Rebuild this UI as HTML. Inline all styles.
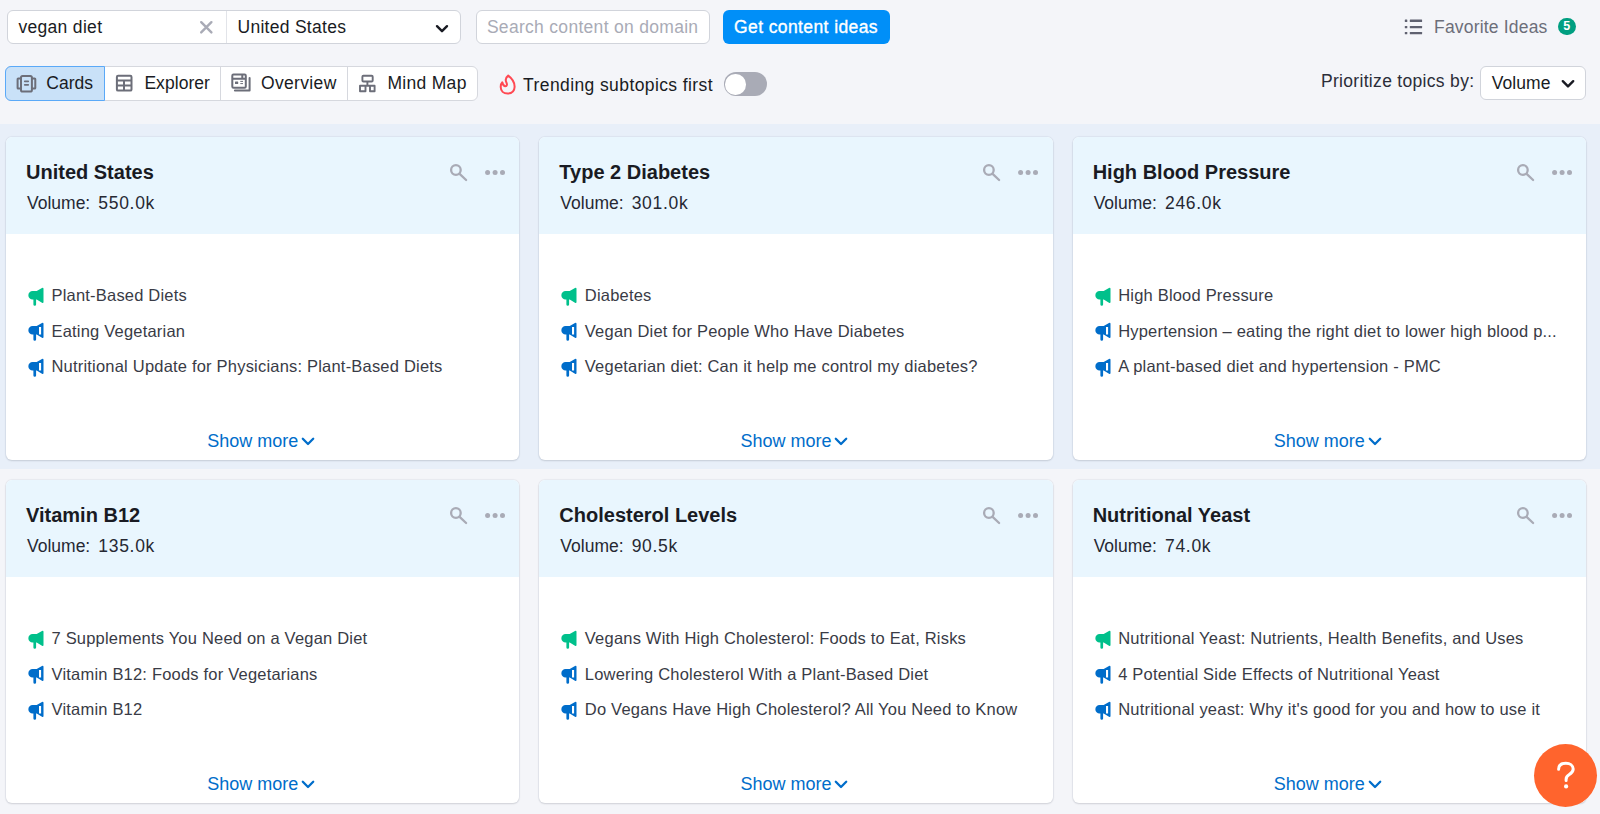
<!DOCTYPE html>
<html><head><meta charset="utf-8"><style>
html,body{margin:0;padding:0;}
body{width:1600px;height:814px;position:relative;overflow:hidden;background:#f4f5f9;font-family:"Liberation Sans",sans-serif;}
.t{position:absolute;white-space:nowrap;}
.box{position:absolute;border:1px solid #d1d4db;border-radius:6px;background:#fff;}
.card{position:absolute;background:#fff;border-radius:6px;box-shadow:0 0 1px 1px rgba(25,40,80,0.05),0 1px 2px rgba(25,27,35,0.12);overflow:hidden;}
.hd{position:absolute;left:0;top:0;right:0;height:97px;background:#e9f6fe;}
</style></head><body>
<div class="box" style="left:7px;top:10px;width:452px;height:32px;"></div>
<div style="position:absolute;left:226px;top:11px;width:1px;height:32px;background:#e2e4e9"></div>
<div class="t" style="left:18.4px;top:19.48px;font-size:17.5px;line-height:17.5px;color:#191b23;letter-spacing:0.32px;font-weight:normal;">vegan diet</div>
<svg style="position:absolute;left:199px;top:19.6px" width="15" height="15" viewBox="0 0 15 15"><path d="M2.2 2.2L12.4 12.4M12.4 2.2L2.2 12.4" stroke="#a9abb6" stroke-width="2.4" stroke-linecap="round"/></svg>
<div class="t" style="left:237.5px;top:18.68px;font-size:17.5px;line-height:17.5px;color:#191b23;letter-spacing:0.28px;font-weight:normal;">United States</div>
<svg style="position:absolute;left:434px;top:22.8px" width="16" height="12" viewBox="0 0 16 12"><path d="M3 3.2L8 8.2L13 3.2" fill="none" stroke="#191b23" stroke-width="2.4" stroke-linecap="round" stroke-linejoin="round"/></svg>
<div class="box" style="left:475.5px;top:10px;width:232.5px;height:32px;"></div>
<div class="t" style="left:486.9px;top:19.18px;font-size:17.5px;line-height:17.5px;color:#a9abb6;letter-spacing:0.3px;font-weight:normal;">Search content on domain</div>
<div style="position:absolute;left:723px;top:10px;width:167px;height:34px;background:#008ff8;border-radius:6px"></div>
<div class="t" style="left:734px;top:18.98px;font-size:17.5px;line-height:17.5px;color:#fff;letter-spacing:0.4px;font-weight:normal;-webkit-text-stroke:0.35px #fff;">Get content ideas</div>
<svg style="position:absolute;left:1402px;top:17px" width="24" height="20" viewBox="0 0 24 20"><g fill="#5f6170"><rect x="2.8" y="2.6" width="2.5" height="2.3" rx="0.5"/><rect x="2.8" y="8.9" width="2.5" height="2.3" rx="0.5"/><rect x="2.8" y="14.9" width="2.5" height="2.3" rx="0.5"/><rect x="7.8" y="2.6" width="12.3" height="2.3" rx="0.5"/><rect x="7.8" y="8.9" width="12.3" height="2.3" rx="0.5"/><rect x="7.8" y="14.9" width="12.3" height="2.3" rx="0.5"/></g></svg>
<div class="t" style="left:1434px;top:18.98px;font-size:17.5px;line-height:17.5px;color:#6c6e79;letter-spacing:0.19px;font-weight:normal;">Favorite Ideas</div>
<div style="position:absolute;left:1558px;top:17.7px;width:17.7px;height:17.7px;border-radius:50%;background:#009f81;color:#fff;font-size:12.5px;line-height:17.7px;text-align:center;font-weight:bold">5</div>
<div style="position:absolute;left:5px;top:66px;width:473px;height:34.5px;box-sizing:border-box;border:1px solid #d6d8de;border-radius:6px;background:#fff"></div>
<div style="position:absolute;left:5px;top:66px;width:99.5px;height:34.5px;box-sizing:border-box;border:1px solid #5aa9f8;border-radius:6px 0 0 6px;background:#c9e1f8"></div>
<div style="position:absolute;left:220.3px;top:67px;width:1px;height:32.5px;background:#d6d8de"></div>
<div style="position:absolute;left:346.9px;top:67px;width:1px;height:32.5px;background:#d6d8de"></div>
<div class="t" style="left:46.25px;top:75.08px;font-size:17.5px;line-height:17.5px;color:#191b23;letter-spacing:0.02px;font-weight:normal;">Cards</div>
<div class="t" style="left:144.4px;top:75.08px;font-size:17.5px;line-height:17.5px;color:#191b23;letter-spacing:0.05px;font-weight:normal;">Explorer</div>
<div class="t" style="left:261px;top:75.08px;font-size:17.5px;line-height:17.5px;color:#191b23;letter-spacing:0.34px;font-weight:normal;">Overview</div>
<div class="t" style="left:387.5px;top:75.08px;font-size:17.5px;line-height:17.5px;color:#191b23;letter-spacing:0.29px;font-weight:normal;">Mind Map</div>
<svg style="position:absolute;left:14px;top:73px" width="24" height="20" viewBox="0 0 24 20"><g fill="none" stroke="#6c6e79" stroke-width="2"><rect x="7" y="2.9" width="10.9" height="15.6" rx="1.6"/><path d="M7 5.5H4.2Q3.6 5.5 3.6 6.1V14.9Q3.6 15.5 4.2 15.5H7M17.9 5.5H20.7Q21.3 5.5 21.3 6.1V14.9Q21.3 15.5 20.7 15.5H17.9"/></g><g stroke="#6c6e79" stroke-width="1.8" stroke-linecap="round"><path d="M10.8 8.3H14.2M10.8 11.8H14.2"/></g></svg>
<svg style="position:absolute;left:114px;top:73px" width="20" height="20" viewBox="0 0 20 20"><g fill="none" stroke="#6c6e79" stroke-width="2"><rect x="2.9" y="2.8" width="14.6" height="14.8" rx="1.2"/><path d="M2.9 7.6H17.5M2.9 12.4H17.5M10 7.6V17.6"/></g></svg>
<svg style="position:absolute;left:229px;top:71px" width="24" height="23" viewBox="0 0 24 23"><g fill="none" stroke="#6c6e79" stroke-width="2"><rect x="3.3" y="3.5" width="13.5" height="13.2" rx="1.2"/><path d="M3.3 7.7H16.8M13.3 3.5V7.7"/><path d="M20.6 7V19.6H5.9" stroke-linecap="round" stroke-linejoin="round"/></g><rect x="6" y="10.5" width="3.2" height="2.6" fill="#6c6e79" rx="0.4"/><path d="M11.3 10.4H14M11.3 12.6H14" stroke="#6c6e79" stroke-width="1"/></svg>
<svg style="position:absolute;left:356px;top:72px" width="22" height="22" viewBox="0 0 22 22"><g fill="none" stroke="#6c6e79" stroke-width="1.9"><rect x="6.4" y="3.8" width="10.3" height="5.7" rx="1"/><path d="M11.4 9.5V13.8"/><path d="M4 13.8H18.6V19.3H14V13.8H9.5V19.3H4Z" stroke-linejoin="round"/></g></svg>
<svg style="position:absolute;left:498px;top:73px" width="20" height="24" viewBox="0 0 20 24"><path d="M10.2 2.6C14.5 5.8 16.8 8.8 16.6 14C16.4 18.5 13.2 20.5 9.6 20.5C5.6 20.5 2.7 17.8 2.7 14C2.7 11.6 3.3 10.2 4.3 9.3C4.8 11.8 6 13.3 7.4 13.3C9.1 13.3 9.3 11.3 8.4 9.5C7.2 7 7.6 4.6 10.2 2.6Z" fill="none" stroke="#ff4953" stroke-width="2" stroke-linejoin="round"/></svg>
<div class="t" style="left:523.1px;top:77.38px;font-size:17.5px;line-height:17.5px;color:#191b23;letter-spacing:0.4px;font-weight:normal;">Trending subtopics first</div>
<div style="position:absolute;left:724px;top:72.2px;width:43.4px;height:24.3px;border-radius:13px;background:#a9abb6"></div>
<div style="position:absolute;left:725.4px;top:74.1px;width:20.5px;height:20.5px;border-radius:50%;background:#fff"></div>
<div class="t" style="left:1321px;top:73.38px;font-size:17.5px;line-height:17.5px;color:#2b2d38;letter-spacing:0.31px;font-weight:normal;">Prioritize topics by:</div>
<div class="box" style="left:1480px;top:66.3px;width:104.4px;height:31.9px;"></div>
<div class="t" style="left:1491.7px;top:75.18px;font-size:17.5px;line-height:17.5px;color:#191b23;letter-spacing:0.07px;font-weight:normal;">Volume</div>
<svg style="position:absolute;left:1560px;top:78px" width="16" height="12" viewBox="0 0 16 12"><path d="M2.8 3.2L8 8.4L13.2 3.2" fill="none" stroke="#191b23" stroke-width="2.4" stroke-linecap="round" stroke-linejoin="round"/></svg>
<div style="position:absolute;left:0;top:123.6px;width:1600px;height:345.9px;background:#e8eff9"></div>
<div class="card" style="left:6.00px;top:137px;width:513.33px;height:323px"><div class="hd"></div></div>
<div class="t" style="left:26.0px;top:161.87px;font-size:20px;line-height:20px;color:#191b23;letter-spacing:0px;font-weight:bold;">United States</div>
<div class="t" style="left:27.0px;top:195.38px;font-size:17.5px;line-height:17.5px;color:#262833;letter-spacing:0px;font-weight:normal;">Volume:</div>
<div class="t" style="left:98.3px;top:195.38px;font-size:17.5px;line-height:17.5px;color:#262833;letter-spacing:0.7px;font-weight:normal;">550.0k</div>
<svg style="position:absolute;left:446.0px;top:160px" width="24" height="24" viewBox="0 0 24 24"><circle cx="9.9" cy="10" r="4.8" fill="none" stroke="#a9abb6" stroke-width="2.3"/><path d="M13.6 13.9L20.1 20" stroke="#a9abb6" stroke-width="2.3" stroke-linecap="round"/></svg>
<svg style="position:absolute;left:482.0px;top:165px" width="26" height="15" viewBox="0 0 26 15"><g fill="#a9abb6"><circle cx="5.6" cy="7.4" r="2.5"/><circle cx="13.1" cy="7.4" r="2.5"/><circle cx="20.5" cy="7.4" r="2.5"/></g></svg>
<svg style="position:absolute;left:24.0px;top:283.8px" width="24" height="24" viewBox="0 0 24 24"><path fill-rule="evenodd" fill="#00c08b" d="M8.6 7.1H12.7L18 3.9Q19.5 3.2 19.5 4.8V18Q19.5 19.5 18 18.8L12.7 15.6H12.1V20.6Q12.1 21.8 10.75 21.8Q9.4 21.8 9.4 20.6V15.6H8.6A4.25 4.25 0 0 1 8.6 7.1Z"/></svg>
<div class="t" style="left:51.5px;top:287.03px;font-size:16.5px;line-height:16.5px;color:#393b46;letter-spacing:0.2px;font-weight:normal;">Plant-Based Diets</div>
<svg style="position:absolute;left:24.0px;top:319.3px" width="24" height="24" viewBox="0 0 24 24"><path fill-rule="evenodd" fill="#006dca" d="M8.6 7.1H12.7L18 3.9Q19.5 3.2 19.5 4.8V18Q19.5 19.5 18 18.8L12.7 15.6H12.1V20.6Q12.1 21.8 10.75 21.8Q9.4 21.8 9.4 20.6V15.6H8.6A4.25 4.25 0 0 1 8.6 7.1Z M15 8V15.6H17.1V8Z"/></svg>
<div class="t" style="left:51.5px;top:322.58px;font-size:16.5px;line-height:16.5px;color:#393b46;letter-spacing:0.2px;font-weight:normal;">Eating Vegetarian</div>
<svg style="position:absolute;left:24.0px;top:354.8px" width="24" height="24" viewBox="0 0 24 24"><path fill-rule="evenodd" fill="#006dca" d="M8.6 7.1H12.7L18 3.9Q19.5 3.2 19.5 4.8V18Q19.5 19.5 18 18.8L12.7 15.6H12.1V20.6Q12.1 21.8 10.75 21.8Q9.4 21.8 9.4 20.6V15.6H8.6A4.25 4.25 0 0 1 8.6 7.1Z M15 8V15.6H17.1V8Z"/></svg>
<div class="t" style="left:51.5px;top:358.13px;font-size:16.5px;line-height:16.5px;color:#393b46;letter-spacing:0.2px;font-weight:normal;">Nutritional Update for Physicians: Plant-Based Diets</div>
<div class="t" style="left:207.16500000000002px;top:431.66px;font-size:18px;line-height:18px;color:#006dca;letter-spacing:0px;font-weight:normal;">Show more</div>
<svg style="position:absolute;left:299.87px;top:434.15px" width="16" height="14" viewBox="0 0 16 14"><path d="M2.8 4.8L8 10L13.2 4.8" fill="none" stroke="#006dca" stroke-width="2.3" stroke-linecap="round" stroke-linejoin="round"/></svg>
<div class="card" style="left:539.33px;top:137px;width:513.33px;height:323px"><div class="hd"></div></div>
<div class="t" style="left:559.33px;top:161.87px;font-size:20px;line-height:20px;color:#191b23;letter-spacing:0px;font-weight:bold;">Type 2 Diabetes</div>
<div class="t" style="left:560.33px;top:195.38px;font-size:17.5px;line-height:17.5px;color:#262833;letter-spacing:0px;font-weight:normal;">Volume:</div>
<div class="t" style="left:631.63px;top:195.38px;font-size:17.5px;line-height:17.5px;color:#262833;letter-spacing:0.7px;font-weight:normal;">301.0k</div>
<svg style="position:absolute;left:979.33px;top:160px" width="24" height="24" viewBox="0 0 24 24"><circle cx="9.9" cy="10" r="4.8" fill="none" stroke="#a9abb6" stroke-width="2.3"/><path d="M13.6 13.9L20.1 20" stroke="#a9abb6" stroke-width="2.3" stroke-linecap="round"/></svg>
<svg style="position:absolute;left:1015.33px;top:165px" width="26" height="15" viewBox="0 0 26 15"><g fill="#a9abb6"><circle cx="5.6" cy="7.4" r="2.5"/><circle cx="13.1" cy="7.4" r="2.5"/><circle cx="20.5" cy="7.4" r="2.5"/></g></svg>
<svg style="position:absolute;left:557.33px;top:283.8px" width="24" height="24" viewBox="0 0 24 24"><path fill-rule="evenodd" fill="#00c08b" d="M8.6 7.1H12.7L18 3.9Q19.5 3.2 19.5 4.8V18Q19.5 19.5 18 18.8L12.7 15.6H12.1V20.6Q12.1 21.8 10.75 21.8Q9.4 21.8 9.4 20.6V15.6H8.6A4.25 4.25 0 0 1 8.6 7.1Z"/></svg>
<div class="t" style="left:584.83px;top:287.03px;font-size:16.5px;line-height:16.5px;color:#393b46;letter-spacing:0.2px;font-weight:normal;">Diabetes</div>
<svg style="position:absolute;left:557.33px;top:319.3px" width="24" height="24" viewBox="0 0 24 24"><path fill-rule="evenodd" fill="#006dca" d="M8.6 7.1H12.7L18 3.9Q19.5 3.2 19.5 4.8V18Q19.5 19.5 18 18.8L12.7 15.6H12.1V20.6Q12.1 21.8 10.75 21.8Q9.4 21.8 9.4 20.6V15.6H8.6A4.25 4.25 0 0 1 8.6 7.1Z M15 8V15.6H17.1V8Z"/></svg>
<div class="t" style="left:584.83px;top:322.58px;font-size:16.5px;line-height:16.5px;color:#393b46;letter-spacing:0.2px;font-weight:normal;">Vegan Diet for People Who Have Diabetes</div>
<svg style="position:absolute;left:557.33px;top:354.8px" width="24" height="24" viewBox="0 0 24 24"><path fill-rule="evenodd" fill="#006dca" d="M8.6 7.1H12.7L18 3.9Q19.5 3.2 19.5 4.8V18Q19.5 19.5 18 18.8L12.7 15.6H12.1V20.6Q12.1 21.8 10.75 21.8Q9.4 21.8 9.4 20.6V15.6H8.6A4.25 4.25 0 0 1 8.6 7.1Z M15 8V15.6H17.1V8Z"/></svg>
<div class="t" style="left:584.83px;top:358.13px;font-size:16.5px;line-height:16.5px;color:#393b46;letter-spacing:0.2px;font-weight:normal;">Vegetarian diet: Can it help me control my diabetes?</div>
<div class="t" style="left:740.4950000000001px;top:431.66px;font-size:18px;line-height:18px;color:#006dca;letter-spacing:0px;font-weight:normal;">Show more</div>
<svg style="position:absolute;left:833.20px;top:434.15px" width="16" height="14" viewBox="0 0 16 14"><path d="M2.8 4.8L8 10L13.2 4.8" fill="none" stroke="#006dca" stroke-width="2.3" stroke-linecap="round" stroke-linejoin="round"/></svg>
<div class="card" style="left:1072.66px;top:137px;width:513.33px;height:323px"><div class="hd"></div></div>
<div class="t" style="left:1092.66px;top:161.87px;font-size:20px;line-height:20px;color:#191b23;letter-spacing:0px;font-weight:bold;">High Blood Pressure</div>
<div class="t" style="left:1093.66px;top:195.38px;font-size:17.5px;line-height:17.5px;color:#262833;letter-spacing:0px;font-weight:normal;">Volume:</div>
<div class="t" style="left:1164.96px;top:195.38px;font-size:17.5px;line-height:17.5px;color:#262833;letter-spacing:0.7px;font-weight:normal;">246.0k</div>
<svg style="position:absolute;left:1512.66px;top:160px" width="24" height="24" viewBox="0 0 24 24"><circle cx="9.9" cy="10" r="4.8" fill="none" stroke="#a9abb6" stroke-width="2.3"/><path d="M13.6 13.9L20.1 20" stroke="#a9abb6" stroke-width="2.3" stroke-linecap="round"/></svg>
<svg style="position:absolute;left:1548.66px;top:165px" width="26" height="15" viewBox="0 0 26 15"><g fill="#a9abb6"><circle cx="5.6" cy="7.4" r="2.5"/><circle cx="13.1" cy="7.4" r="2.5"/><circle cx="20.5" cy="7.4" r="2.5"/></g></svg>
<svg style="position:absolute;left:1090.66px;top:283.8px" width="24" height="24" viewBox="0 0 24 24"><path fill-rule="evenodd" fill="#00c08b" d="M8.6 7.1H12.7L18 3.9Q19.5 3.2 19.5 4.8V18Q19.5 19.5 18 18.8L12.7 15.6H12.1V20.6Q12.1 21.8 10.75 21.8Q9.4 21.8 9.4 20.6V15.6H8.6A4.25 4.25 0 0 1 8.6 7.1Z"/></svg>
<div class="t" style="left:1118.16px;top:287.03px;font-size:16.5px;line-height:16.5px;color:#393b46;letter-spacing:0.2px;font-weight:normal;">High Blood Pressure</div>
<svg style="position:absolute;left:1090.66px;top:319.3px" width="24" height="24" viewBox="0 0 24 24"><path fill-rule="evenodd" fill="#006dca" d="M8.6 7.1H12.7L18 3.9Q19.5 3.2 19.5 4.8V18Q19.5 19.5 18 18.8L12.7 15.6H12.1V20.6Q12.1 21.8 10.75 21.8Q9.4 21.8 9.4 20.6V15.6H8.6A4.25 4.25 0 0 1 8.6 7.1Z M15 8V15.6H17.1V8Z"/></svg>
<div class="t" style="left:1118.16px;top:322.58px;font-size:16.5px;line-height:16.5px;color:#393b46;letter-spacing:0.2px;font-weight:normal;">Hypertension – eating the right diet to lower high blood p...</div>
<svg style="position:absolute;left:1090.66px;top:354.8px" width="24" height="24" viewBox="0 0 24 24"><path fill-rule="evenodd" fill="#006dca" d="M8.6 7.1H12.7L18 3.9Q19.5 3.2 19.5 4.8V18Q19.5 19.5 18 18.8L12.7 15.6H12.1V20.6Q12.1 21.8 10.75 21.8Q9.4 21.8 9.4 20.6V15.6H8.6A4.25 4.25 0 0 1 8.6 7.1Z M15 8V15.6H17.1V8Z"/></svg>
<div class="t" style="left:1118.16px;top:358.13px;font-size:16.5px;line-height:16.5px;color:#393b46;letter-spacing:0.2px;font-weight:normal;">A plant-based diet and hypertension - PMC</div>
<div class="t" style="left:1273.825px;top:431.66px;font-size:18px;line-height:18px;color:#006dca;letter-spacing:0px;font-weight:normal;">Show more</div>
<svg style="position:absolute;left:1366.53px;top:434.15px" width="16" height="14" viewBox="0 0 16 14"><path d="M2.8 4.8L8 10L13.2 4.8" fill="none" stroke="#006dca" stroke-width="2.3" stroke-linecap="round" stroke-linejoin="round"/></svg>
<div class="card" style="left:6.00px;top:480px;width:513.33px;height:323px"><div class="hd"></div></div>
<div class="t" style="left:26.0px;top:504.87px;font-size:20px;line-height:20px;color:#191b23;letter-spacing:0px;font-weight:bold;">Vitamin B12</div>
<div class="t" style="left:27.0px;top:538.38px;font-size:17.5px;line-height:17.5px;color:#262833;letter-spacing:0px;font-weight:normal;">Volume:</div>
<div class="t" style="left:98.3px;top:538.38px;font-size:17.5px;line-height:17.5px;color:#262833;letter-spacing:0.7px;font-weight:normal;">135.0k</div>
<svg style="position:absolute;left:446.0px;top:503px" width="24" height="24" viewBox="0 0 24 24"><circle cx="9.9" cy="10" r="4.8" fill="none" stroke="#a9abb6" stroke-width="2.3"/><path d="M13.6 13.9L20.1 20" stroke="#a9abb6" stroke-width="2.3" stroke-linecap="round"/></svg>
<svg style="position:absolute;left:482.0px;top:508px" width="26" height="15" viewBox="0 0 26 15"><g fill="#a9abb6"><circle cx="5.6" cy="7.4" r="2.5"/><circle cx="13.1" cy="7.4" r="2.5"/><circle cx="20.5" cy="7.4" r="2.5"/></g></svg>
<svg style="position:absolute;left:24.0px;top:626.8px" width="24" height="24" viewBox="0 0 24 24"><path fill-rule="evenodd" fill="#00c08b" d="M8.6 7.1H12.7L18 3.9Q19.5 3.2 19.5 4.8V18Q19.5 19.5 18 18.8L12.7 15.6H12.1V20.6Q12.1 21.8 10.75 21.8Q9.4 21.8 9.4 20.6V15.6H8.6A4.25 4.25 0 0 1 8.6 7.1Z"/></svg>
<div class="t" style="left:51.5px;top:630.03px;font-size:16.5px;line-height:16.5px;color:#393b46;letter-spacing:0.2px;font-weight:normal;">7 Supplements You Need on a Vegan Diet</div>
<svg style="position:absolute;left:24.0px;top:662.3px" width="24" height="24" viewBox="0 0 24 24"><path fill-rule="evenodd" fill="#006dca" d="M8.6 7.1H12.7L18 3.9Q19.5 3.2 19.5 4.8V18Q19.5 19.5 18 18.8L12.7 15.6H12.1V20.6Q12.1 21.8 10.75 21.8Q9.4 21.8 9.4 20.6V15.6H8.6A4.25 4.25 0 0 1 8.6 7.1Z M15 8V15.6H17.1V8Z"/></svg>
<div class="t" style="left:51.5px;top:665.58px;font-size:16.5px;line-height:16.5px;color:#393b46;letter-spacing:0.2px;font-weight:normal;">Vitamin B12: Foods for Vegetarians</div>
<svg style="position:absolute;left:24.0px;top:697.8px" width="24" height="24" viewBox="0 0 24 24"><path fill-rule="evenodd" fill="#006dca" d="M8.6 7.1H12.7L18 3.9Q19.5 3.2 19.5 4.8V18Q19.5 19.5 18 18.8L12.7 15.6H12.1V20.6Q12.1 21.8 10.75 21.8Q9.4 21.8 9.4 20.6V15.6H8.6A4.25 4.25 0 0 1 8.6 7.1Z M15 8V15.6H17.1V8Z"/></svg>
<div class="t" style="left:51.5px;top:701.13px;font-size:16.5px;line-height:16.5px;color:#393b46;letter-spacing:0.2px;font-weight:normal;">Vitamin B12</div>
<div class="t" style="left:207.16500000000002px;top:774.66px;font-size:18px;line-height:18px;color:#006dca;letter-spacing:0px;font-weight:normal;">Show more</div>
<svg style="position:absolute;left:299.87px;top:777.15px" width="16" height="14" viewBox="0 0 16 14"><path d="M2.8 4.8L8 10L13.2 4.8" fill="none" stroke="#006dca" stroke-width="2.3" stroke-linecap="round" stroke-linejoin="round"/></svg>
<div class="card" style="left:539.33px;top:480px;width:513.33px;height:323px"><div class="hd"></div></div>
<div class="t" style="left:559.33px;top:504.87px;font-size:20px;line-height:20px;color:#191b23;letter-spacing:0px;font-weight:bold;">Cholesterol Levels</div>
<div class="t" style="left:560.33px;top:538.38px;font-size:17.5px;line-height:17.5px;color:#262833;letter-spacing:0px;font-weight:normal;">Volume:</div>
<div class="t" style="left:631.63px;top:538.38px;font-size:17.5px;line-height:17.5px;color:#262833;letter-spacing:0.7px;font-weight:normal;">90.5k</div>
<svg style="position:absolute;left:979.33px;top:503px" width="24" height="24" viewBox="0 0 24 24"><circle cx="9.9" cy="10" r="4.8" fill="none" stroke="#a9abb6" stroke-width="2.3"/><path d="M13.6 13.9L20.1 20" stroke="#a9abb6" stroke-width="2.3" stroke-linecap="round"/></svg>
<svg style="position:absolute;left:1015.33px;top:508px" width="26" height="15" viewBox="0 0 26 15"><g fill="#a9abb6"><circle cx="5.6" cy="7.4" r="2.5"/><circle cx="13.1" cy="7.4" r="2.5"/><circle cx="20.5" cy="7.4" r="2.5"/></g></svg>
<svg style="position:absolute;left:557.33px;top:626.8px" width="24" height="24" viewBox="0 0 24 24"><path fill-rule="evenodd" fill="#00c08b" d="M8.6 7.1H12.7L18 3.9Q19.5 3.2 19.5 4.8V18Q19.5 19.5 18 18.8L12.7 15.6H12.1V20.6Q12.1 21.8 10.75 21.8Q9.4 21.8 9.4 20.6V15.6H8.6A4.25 4.25 0 0 1 8.6 7.1Z"/></svg>
<div class="t" style="left:584.83px;top:630.03px;font-size:16.5px;line-height:16.5px;color:#393b46;letter-spacing:0.2px;font-weight:normal;">Vegans With High Cholesterol: Foods to Eat, Risks</div>
<svg style="position:absolute;left:557.33px;top:662.3px" width="24" height="24" viewBox="0 0 24 24"><path fill-rule="evenodd" fill="#006dca" d="M8.6 7.1H12.7L18 3.9Q19.5 3.2 19.5 4.8V18Q19.5 19.5 18 18.8L12.7 15.6H12.1V20.6Q12.1 21.8 10.75 21.8Q9.4 21.8 9.4 20.6V15.6H8.6A4.25 4.25 0 0 1 8.6 7.1Z M15 8V15.6H17.1V8Z"/></svg>
<div class="t" style="left:584.83px;top:665.58px;font-size:16.5px;line-height:16.5px;color:#393b46;letter-spacing:0.2px;font-weight:normal;">Lowering Cholesterol With a Plant-Based Diet</div>
<svg style="position:absolute;left:557.33px;top:697.8px" width="24" height="24" viewBox="0 0 24 24"><path fill-rule="evenodd" fill="#006dca" d="M8.6 7.1H12.7L18 3.9Q19.5 3.2 19.5 4.8V18Q19.5 19.5 18 18.8L12.7 15.6H12.1V20.6Q12.1 21.8 10.75 21.8Q9.4 21.8 9.4 20.6V15.6H8.6A4.25 4.25 0 0 1 8.6 7.1Z M15 8V15.6H17.1V8Z"/></svg>
<div class="t" style="left:584.83px;top:701.13px;font-size:16.5px;line-height:16.5px;color:#393b46;letter-spacing:0.2px;font-weight:normal;">Do Vegans Have High Cholesterol? All You Need to Know</div>
<div class="t" style="left:740.4950000000001px;top:774.66px;font-size:18px;line-height:18px;color:#006dca;letter-spacing:0px;font-weight:normal;">Show more</div>
<svg style="position:absolute;left:833.20px;top:777.15px" width="16" height="14" viewBox="0 0 16 14"><path d="M2.8 4.8L8 10L13.2 4.8" fill="none" stroke="#006dca" stroke-width="2.3" stroke-linecap="round" stroke-linejoin="round"/></svg>
<div class="card" style="left:1072.66px;top:480px;width:513.33px;height:323px"><div class="hd"></div></div>
<div class="t" style="left:1092.66px;top:504.87px;font-size:20px;line-height:20px;color:#191b23;letter-spacing:0px;font-weight:bold;">Nutritional Yeast</div>
<div class="t" style="left:1093.66px;top:538.38px;font-size:17.5px;line-height:17.5px;color:#262833;letter-spacing:0px;font-weight:normal;">Volume:</div>
<div class="t" style="left:1164.96px;top:538.38px;font-size:17.5px;line-height:17.5px;color:#262833;letter-spacing:0.7px;font-weight:normal;">74.0k</div>
<svg style="position:absolute;left:1512.66px;top:503px" width="24" height="24" viewBox="0 0 24 24"><circle cx="9.9" cy="10" r="4.8" fill="none" stroke="#a9abb6" stroke-width="2.3"/><path d="M13.6 13.9L20.1 20" stroke="#a9abb6" stroke-width="2.3" stroke-linecap="round"/></svg>
<svg style="position:absolute;left:1548.66px;top:508px" width="26" height="15" viewBox="0 0 26 15"><g fill="#a9abb6"><circle cx="5.6" cy="7.4" r="2.5"/><circle cx="13.1" cy="7.4" r="2.5"/><circle cx="20.5" cy="7.4" r="2.5"/></g></svg>
<svg style="position:absolute;left:1090.66px;top:626.8px" width="24" height="24" viewBox="0 0 24 24"><path fill-rule="evenodd" fill="#00c08b" d="M8.6 7.1H12.7L18 3.9Q19.5 3.2 19.5 4.8V18Q19.5 19.5 18 18.8L12.7 15.6H12.1V20.6Q12.1 21.8 10.75 21.8Q9.4 21.8 9.4 20.6V15.6H8.6A4.25 4.25 0 0 1 8.6 7.1Z"/></svg>
<div class="t" style="left:1118.16px;top:630.03px;font-size:16.5px;line-height:16.5px;color:#393b46;letter-spacing:0.2px;font-weight:normal;">Nutritional Yeast: Nutrients, Health Benefits, and Uses</div>
<svg style="position:absolute;left:1090.66px;top:662.3px" width="24" height="24" viewBox="0 0 24 24"><path fill-rule="evenodd" fill="#006dca" d="M8.6 7.1H12.7L18 3.9Q19.5 3.2 19.5 4.8V18Q19.5 19.5 18 18.8L12.7 15.6H12.1V20.6Q12.1 21.8 10.75 21.8Q9.4 21.8 9.4 20.6V15.6H8.6A4.25 4.25 0 0 1 8.6 7.1Z M15 8V15.6H17.1V8Z"/></svg>
<div class="t" style="left:1118.16px;top:665.58px;font-size:16.5px;line-height:16.5px;color:#393b46;letter-spacing:0.2px;font-weight:normal;">4 Potential Side Effects of Nutritional Yeast</div>
<svg style="position:absolute;left:1090.66px;top:697.8px" width="24" height="24" viewBox="0 0 24 24"><path fill-rule="evenodd" fill="#006dca" d="M8.6 7.1H12.7L18 3.9Q19.5 3.2 19.5 4.8V18Q19.5 19.5 18 18.8L12.7 15.6H12.1V20.6Q12.1 21.8 10.75 21.8Q9.4 21.8 9.4 20.6V15.6H8.6A4.25 4.25 0 0 1 8.6 7.1Z M15 8V15.6H17.1V8Z"/></svg>
<div class="t" style="left:1118.16px;top:701.13px;font-size:16.5px;line-height:16.5px;color:#393b46;letter-spacing:0.2px;font-weight:normal;">Nutritional yeast: Why it's good for you and how to use it</div>
<div class="t" style="left:1273.825px;top:774.66px;font-size:18px;line-height:18px;color:#006dca;letter-spacing:0px;font-weight:normal;">Show more</div>
<svg style="position:absolute;left:1366.53px;top:777.15px" width="16" height="14" viewBox="0 0 16 14"><path d="M2.8 4.8L8 10L13.2 4.8" fill="none" stroke="#006dca" stroke-width="2.3" stroke-linecap="round" stroke-linejoin="round"/></svg>
<div style="position:absolute;left:1533.6px;top:743.7px;width:63.6px;height:63.6px;border-radius:50%;background:#ff642d"></div>
<svg style="position:absolute;left:1550px;top:758px" width="32" height="36" viewBox="0 0 32 36"><path d="M8.6 11.2C8.6 7 11.8 5.2 15.9 5.2C20 5.2 23.2 7.6 23.2 11.1C23.2 14.1 21.3 15.4 19 16.8C17 18 16.1 19 16.1 21.4V22.4" fill="none" stroke="#fff" stroke-width="3" stroke-linecap="round"/><circle cx="16.1" cy="28.4" r="2.1" fill="#fff"/></svg>
</body></html>
